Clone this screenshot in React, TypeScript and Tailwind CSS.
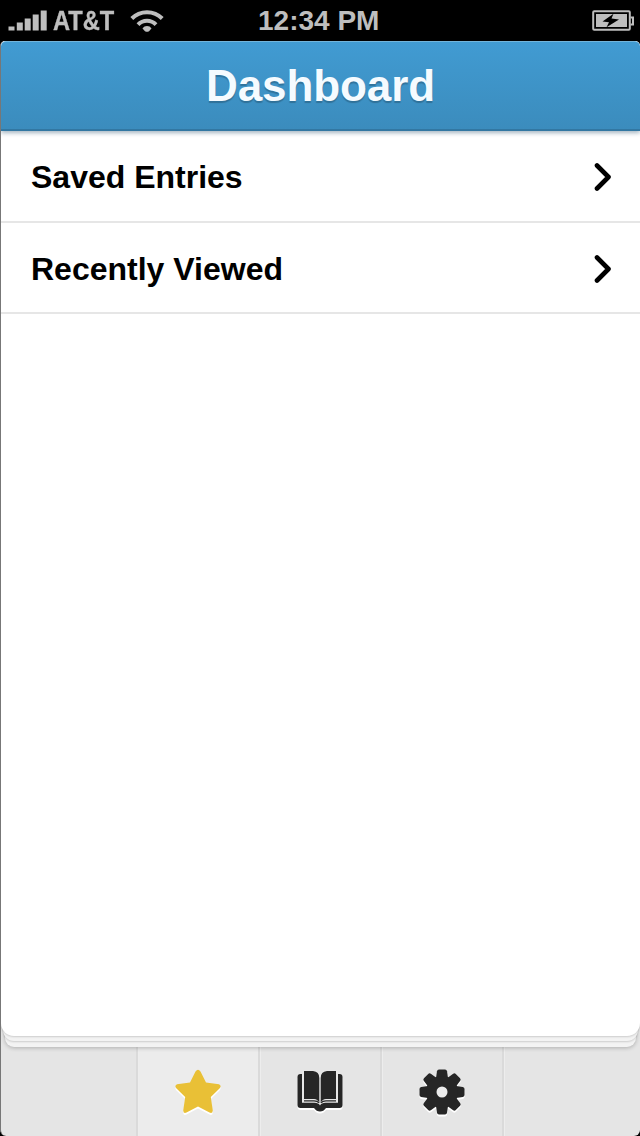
import type { ReactNode } from "react";

function SignalIcon() {
  return (
    <svg className="h-[24px] w-[40px]" viewBox="0 0 40 24" fill="#bebebe">
      <rect x="0.5" y="16.5" width="6" height="4" />
      <rect x="8.8" y="12.5" width="6" height="8" />
      <rect x="16.7" y="8.5" width="6" height="12" />
      <rect x="24.7" y="4.5" width="6" height="16" />
      <rect x="32.7" y="0.5" width="6" height="20" />
    </svg>
  );
}

function WifiIcon() {
  return (
    <svg className="h-[24px] w-[34px]" viewBox="0 0 34 24">
      <path d="M1.8 9.5C10 1 24 1 32.2 9.5" fill="none" stroke="#bebebe" strokeWidth="4" />
      <path d="M8 15.6C13 10.4 21 10.4 26 15.6" fill="none" stroke="#bebebe" strokeWidth="4" />
      <path d="M12.5 19.5C14.5 16.2 19.5 16.2 21.5 19.5L19 22.2Q17 23.4 15 22.2Z" fill="#bebebe" />
    </svg>
  );
}

function BatteryIcon() {
  return (
    <svg className="h-[22px] w-[42px]" viewBox="0 0 42 22">
      <rect x="1.2" y="1.2" width="36.6" height="18.6" rx="1" fill="none" stroke="#bebebe" strokeWidth="2" />
      <rect x="4" y="4" width="31" height="13" fill="#bebebe" />
      <path d="M38.5 7.5H41V14.5H38.5" fill="none" stroke="#bebebe" strokeWidth="2" />
      <path d="M21.5 3.8L10.5 11.4L17 12.2L14.5 17.3L27 9.4L19.5 8.6Z" fill="#000" />
    </svg>
  );
}

function StatusBar() {
  return (
    <div className="grid h-[41px] shrink-0 grid-cols-[259px_1fr_48px] bg-black text-[28px] leading-[42px] font-bold text-[#bebebe]">
      <div className="flex pl-2">
        <div className="pt-[10px]"><SignalIcon /></div>
        <span className="ml-[5px] w-[62px] origin-left scale-x-[.845] whitespace-nowrap [-webkit-text-stroke:0.4px_#bebebe]">AT&amp;T</span>
        <div className="ml-[15px] pt-[9px]"><WifiIcon /></div>
      </div>
      <span className="-ml-px">12:34 PM</span>
      <div className="pt-[10px]"><BatteryIcon /></div>
    </div>
  );
}

function Row({ label, tall }: { label: string; tall?: boolean }) {
  return (
    <li className={`flex items-center justify-between border-b-2 border-[#e6e6e6] pt-[2px] pr-7 pl-[30px] ${tall ? "h-[92px]" : "h-[91px]"}`}>
      <span className="text-[32px] leading-[40px] font-bold text-black">{label}</span>
      <svg className="h-[28px] w-[18px]" viewBox="0 0 18 28">
        <path d="M3 2.5L14.5 14L3 25.5" fill="none" stroke="#000" strokeWidth="4.6" strokeLinecap="round" strokeLinejoin="round" />
      </svg>
    </li>
  );
}

function StarIcon() {
  return (
    <svg className="h-[46px] w-[46px] drop-shadow-[0_2px_0_#fff]" viewBox="0 0 46 46" fill="#e9c036">
      <path d="M20.5 2.5Q23-1 25.5 2.5L31 13.5L44 15.3Q47 16.8 44.5 19.5L35.8 28L37.8 41.5Q37.5 45 34.5 43.6L23 37.6L11.5 43.6Q8.5 45 8.2 41.5L10.2 28L1.5 19.5Q-1 16.8 2 15.3L15 13.5Z" />
    </svg>
  );
}

function BookIcon() {
  return (
    <svg className="h-[42px] w-[46px] drop-shadow-[0_2px_0_#fff]" viewBox="0 0 46 42">
      <path d="M3.5 3H42.5Q45.5 3 45.5 6V34Q45.5 37 42.5 37H29Q26.5 40.6 23 40.6T17 37H3.5Q.5 37 .5 34V6Q.5 3 3.5 3Z" fill="#262626" />
      <path d="M5 0H17Q21 0 23 3Q25 0 29 0H41V31.8H28.5Q24.5 31.8 23 34.5Q21.5 31.8 17.5 31.8H5Z" fill="#e8e8e8" />
      <path d="M7 0H16Q22.3 .5 22.3 7V32Q20.5 28 17 28H7ZM39 0H30Q23.7 .5 23.7 7V32Q25.5 28 29 28H39Z" fill="#262626" />
      <path d="M7 29.8H17Q20.5 29.8 22 32M39 29.8H29Q25.5 29.8 24 32" fill="none" stroke="#262626" strokeWidth="1.2" />
    </svg>
  );
}

function GearIcon() {
  return (
    <svg className="h-[46px] w-[46px] drop-shadow-[0_2px_0_#fff]" viewBox="0 0 46 46" fill="#262626">
      <g>
        {[0, 45, 90, 135].map((angle) => (
          <path key={angle} transform={`rotate(${angle} 23 23)`} d="M20 .5H26Q27.7 .5 28 2.2L29 9V37L28 43.8Q27.7 45.5 26 45.5H20Q18.3 45.5 18 43.8L17 37V9L18 2.2Q18.3 .5 20 .5Z" />
        ))}
        <circle cx="23" cy="23" r="16" />
      </g>
      <circle cx="23" cy="23" r="5.5" fill="#ececec" />
    </svg>
  );
}

function Tab({ active, label, children }: { active?: boolean; label: string; children: ReactNode }) {
  return (
    <button aria-label={label} className={`flex items-center justify-center border-r-2 border-r-[#dadada] border-l border-l-[#ededed] pr-px ${active ? "bg-[#ececec]" : ""}`}>
      {children}
    </button>
  );
}

export default function App() {
  return (
    <div className="flex h-[1136px] w-[640px] flex-col overflow-hidden bg-black font-['Liberation_Sans',Arial,sans-serif]">
      <StatusBar />
      <div className="flex min-h-0 flex-1 flex-col overflow-hidden rounded-t-[5px] rounded-b-[6px] border-l border-[#777] bg-[#e5e5e5]">
        <main className="relative z-10 flex h-[995px] shrink-0 flex-col rounded-b-[13px] bg-white shadow-[0_1px_2px_rgba(0,0,0,0.16),0_7px_0_-2px_#f3f3f3,0_8px_2px_-2px_rgba(0,0,0,0.16),0_15px_0_-4px_#f3f3f3,0_16px_4px_-4px_rgba(0,0,0,0.24)]">
          <header className="flex h-[90px] shrink-0 items-center justify-center rounded-t-[5px] border-t border-b-2 border-t-[#72b4da] border-b-[#3277a2] bg-linear-to-b from-[#419bd2] to-[#3b8cbd] shadow-[0_2px_4px_rgba(30,70,100,0.4)]">
            <h1 className="text-[44px] leading-[88px] font-bold tracking-[-0.1px] text-[#f5fbff] [text-shadow:0_2px_1px_rgba(0,0,0,0.22)]">Dashboard</h1>
          </header>
          <ul>
            <Row label="Saved Entries" tall />
            <Row label="Recently Viewed" />
          </ul>
        </main>
        <nav className="grid flex-1 grid-cols-[137px_122px_122px_122px_1fr] pt-[11px]">
          <div className="border-r-2 border-[#dadada]" />
          <Tab active label="Saved"><StarIcon /></Tab>
          <Tab label="Dictionary"><BookIcon /></Tab>
          <Tab label="Settings"><GearIcon /></Tab>
          <div className="border-l border-[#ededed]" />
        </nav>
      </div>
    </div>
  );
}
